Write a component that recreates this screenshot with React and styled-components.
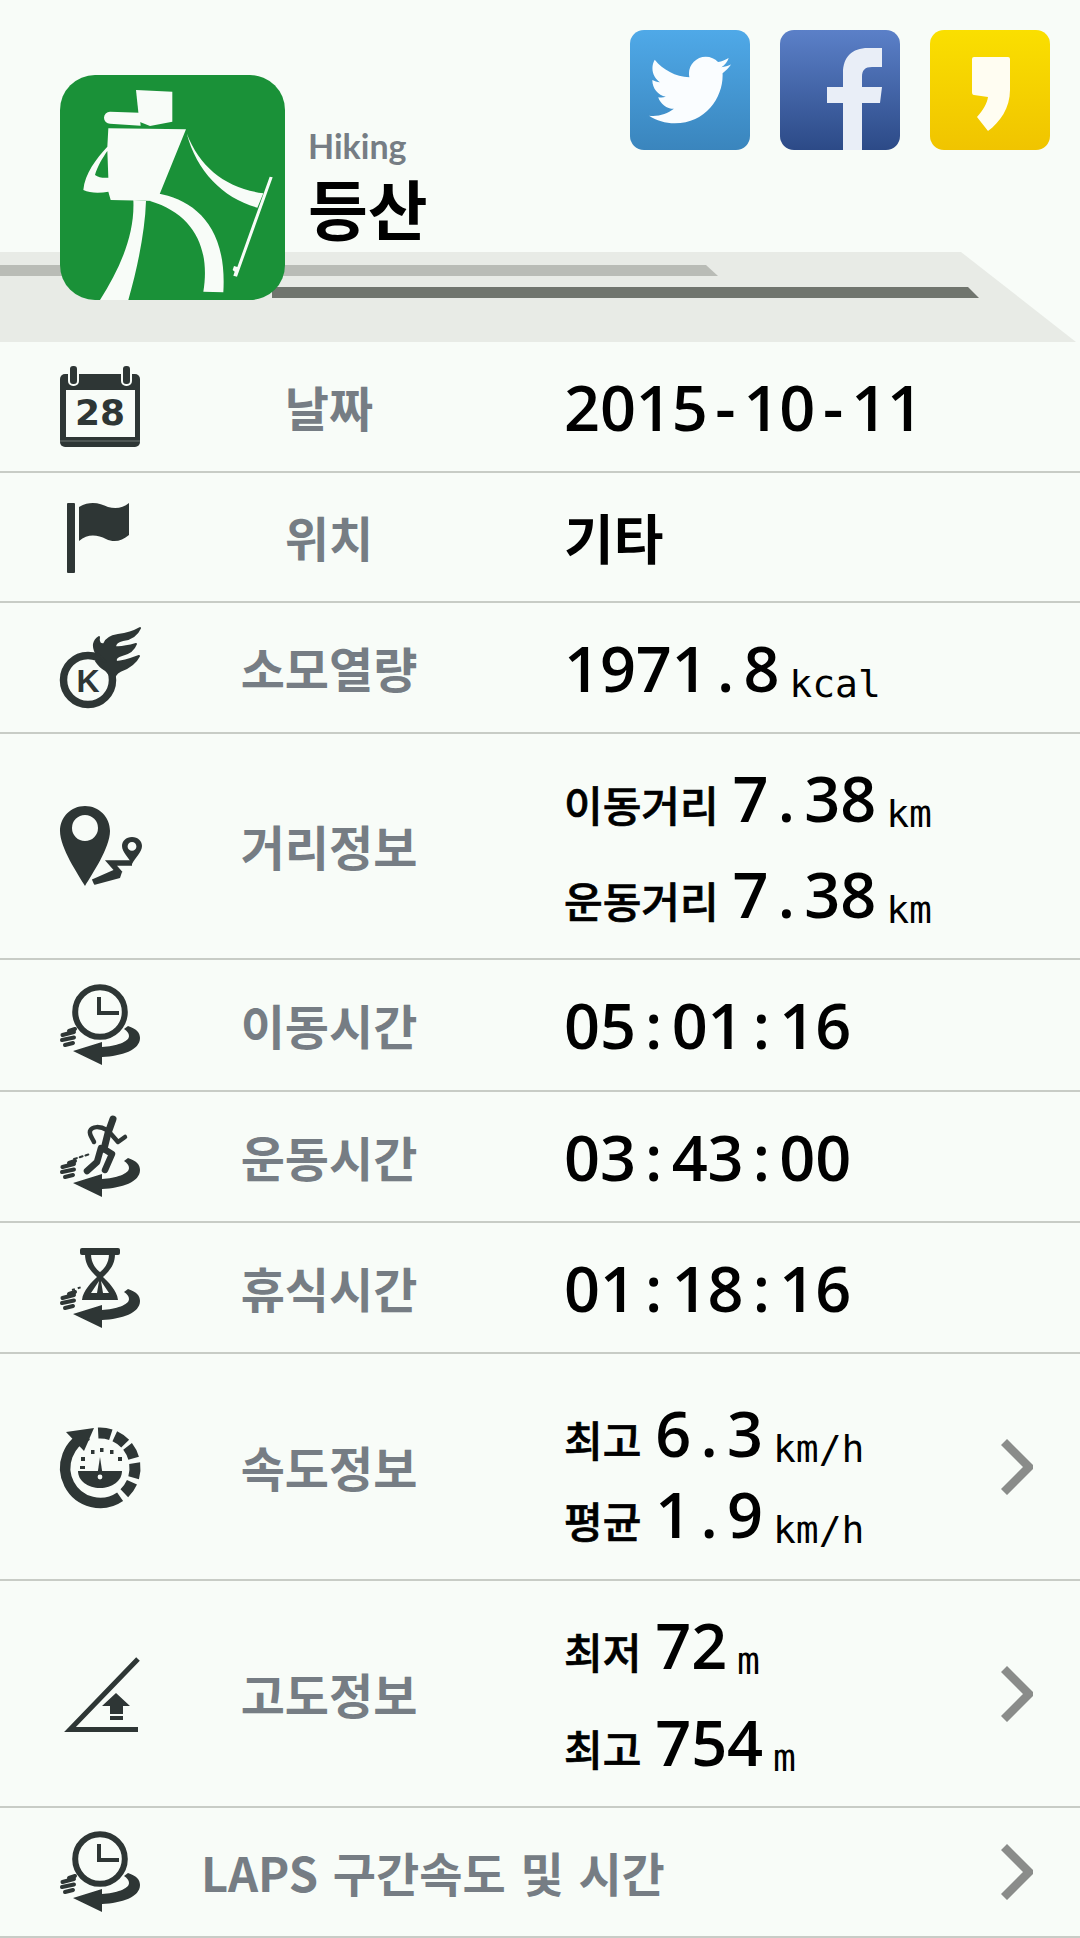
import React from "react";
import styled, { createGlobalStyle } from "styled-components";
import { FaTwitter } from "react-icons/fa";

const GlobalStyle = createGlobalStyle`
  html, body { margin: 0; padding: 0; background: #f8fcf8; }
  * { box-sizing: border-box; }
`;

const ink = "#2e3635";

const Page = styled.div`
  width: 1080px;
  height: 1938px;
  overflow: hidden;
  background: #f8fcf8;
  font-family: "Noto Sans CJK KR", "Noto Sans", sans-serif;
`;

const Header = styled.header`
  position: relative;
  height: 342px;
  display: flex;
  align-items: flex-start;
  padding: 30px 30px 0 60px;
`;

const Road = styled.svg`
  position: absolute;
  left: 0;
  bottom: 0;
  width: 1080px;
  height: 90px;
`;

const Brand = styled.div`
  position: relative;
  display: flex;
  align-items: flex-start;
  margin-top: 45px;
  gap: 23px;
`;

const AppIcon = styled.svg`
  width: 225px;
  height: 225px;
  flex: none;
  display: block;
`;

const BrandText = styled.div`
  display: flex;
  flex-direction: column;
  padding-top: 49px;
`;

const EnglishName = styled.div`
  font-family: Lato, "Noto Sans", sans-serif;
  font-weight: 700;
  font-size: 34px;
  line-height: 44px;
  color: #767d84;
`;

const KoreanName = styled.div`
  font-weight: 700;
  font-size: 65px;
  line-height: 72px;
  margin-top: 3px;
  color: #000;
`;

const Socials = styled.div`
  position: relative;
  margin-left: auto;
  display: flex;
  gap: 30px;
`;

const SocialButton = styled.div`
  width: 120px;
  height: 120px;
  border-radius: 14px;
  overflow: hidden;
  display: flex;
  align-items: center;
  justify-content: center;
  background: linear-gradient(180deg, ${(p) => p.$from}, ${(p) => p.$to});
  color: #fafdff;
  svg { display: block; }
`;

const Row = styled.section`
  height: ${(p) => p.$height}px;
  border-bottom: 2px solid #c8ccc6;
  display: grid;
  grid-template-columns: 80px 378px 1fr auto;
  align-items: center;
  padding: 0 47px 0 60px;
`;

const LinkRow = styled(Row)`
  grid-template-columns: 80px 1fr auto;
`;

const IconSvg = styled.svg`
  width: 80px;
  height: 80px;
  display: block;
  overflow: visible;
`;

const Label = styled.div`
  text-align: center;
  font-weight: 700;
  font-size: 48px;
  line-height: 60px;
  padding-bottom: 2px;
  color: #767d84;
`;

const LinkLabel = styled.div`
  margin-left: 61px;
  font-weight: 700;
  font-size: 47px;
  line-height: 60px;
  word-spacing: 4px;
  color: #767d84;
`;

const Values = styled.div`
  padding-left: 46px;
  padding-top: ${(p) => p.$shift || 0}px;
  display: flex;
  flex-direction: column;
  gap: ${(p) => p.$gap || 0}px;
`;

const ValueLine = styled.div`
  display: flex;
  align-items: baseline;
  height: 72px;
  line-height: 72px;
  color: #000;
  white-space: nowrap;
`;

const Caption = styled.span`
  font-weight: 500;
  font-size: 42px;
  margin-right: 14px;
  -webkit-text-stroke: 0.7px #000;
`;

const Digits = styled.span`
  font-family: "Open Sans", "Noto Sans", sans-serif;
  font-weight: 600;
  font-size: 63px;
`;

// monospaced cell: the original uses a fixed-pitch digit face
const Cell = styled.span`
  display: inline-block;
  width: 35.9px;
  text-align: center;
`;

const Word = styled.span`
  font-weight: 700;
  font-size: 54px;
`;

const Unit = styled.span`
  font-family: "DejaVu Sans Mono", monospace;
  font-size: 38px;
  margin-left: 10px;
  transform: translateY(5px);
`;

const Chevron = styled.svg`
  width: 32px;
  height: 56px;
  display: block;
`;

const Arrow = () => (
  <Chevron viewBox="0 0 32 56">
    <path d="M3 3 L28 28 L3 53" fill="none" stroke="#8a8c8a" strokeWidth="8.5" />
  </Chevron>
);

const Swoosh = () => (
  <g fill={ink}>
    <path d="M68 41 C77 44 80 48 80 53 C80 65 62 71 42 72 L42 80 L13 66 L42 57 L42 62 C56 61 69 57 69 51 C69 48 67 46 64 44 Z" />
    <g stroke={ink} strokeWidth="4" strokeLinecap="round" fill="none">
      <path d="M9 46 L15 44" />
      <path d="M2.5 50 L14 47" />
      <path d="M2 55 L14 52.5" />
      <path d="M5 60 L13 58" />
    </g>
  </g>
);

const CalendarIcon = () => (
  <IconSvg viewBox="0 0 80 80">
    <rect x="0" y="7" width="80" height="73" rx="5" fill={ink} />
    <rect x="6" y="23" width="69" height="47" fill="#f8fcf8" />
    <path d="M0 74 H80" stroke="#6f7674" strokeWidth="1.2" />
    <rect x="9" y="-2" width="9" height="20" rx="4" fill={ink} stroke="#f8fcf8" strokeWidth="2" />
    <rect x="62" y="-2" width="9" height="20" rx="4" fill={ink} stroke="#f8fcf8" strokeWidth="2" />
    <text x="40" y="58" textAnchor="middle" fontFamily="DejaVu Sans, sans-serif" fontWeight="700" fontSize="36" fill={ink}>28</text>
  </IconSvg>
);

const FlagIcon = () => (
  <IconSvg viewBox="0 0 80 80">
    <rect x="7" y="6" width="8" height="70" rx="1" fill={ink} />
    <path d="M19 10 C32 3 40 7 48 10 C56 12 63 11 69 6 V38 C62 44 54 46 46 42 C38 38 28 36 19 44 Z" fill={ink} />
  </IconSvg>
);

const FireIcon = () => (
  <IconSvg viewBox="0 0 80 80">
    <circle cx="28" cy="52" r="24.5" fill="none" stroke={ink} strokeWidth="7.5" />
    <text x="28" y="64" textAnchor="middle" fontFamily="Liberation Sans, sans-serif" fontWeight="700" fontSize="32" fill={ink}>K</text>
    <path
      d="M36 25 C33 19 33 13 39 9 C38 14 40 17 44 16 C46 10 52 8 58 7 C65 6 73 4 80 0 C77 7 70 11 63 12 C58 13 55 16 55 19 C62 20 69 18 76 16 C73 24 67 26 62 27 C57 28 55 31 56 34 C63 34 71 31 79 28 C74 38 65 41 60 43 C56 45 54 48 54 53 C50 47 48 43 44 41 C40 39 38 36 36 33 C40 32 44 33 46 34 C42 30 40 27 36 25 Z"
      fill={ink}
      stroke={ink}
      strokeWidth="2"
      strokeLinejoin="round"
    />
  </IconSvg>
);

const PinIcon = () => (
  <IconSvg viewBox="0 0 80 80">
    <path
      fillRule="evenodd"
      d="M25 0 C39 0 50 11 50 25 C50 42 32 68 25 80 C18 68 0 42 0 25 C0 11 11 0 25 0 Z M25 9 A13 13 0 1 0 25 35 A13 13 0 1 0 25 9 Z"
      fill={ink}
    />
    <path
      fillRule="evenodd"
      d="M72 31 C78 31 82 35 82 40 C82 46 75 52 72 58 C69 52 62 46 62 40 C62 35 66 31 72 31 Z M72 36 A4.4 4.4 0 1 0 72 44.8 A4.4 4.4 0 1 0 72 36 Z"
      fill={ink}
    />
    <path d="M72 57 H51 L58 65 L33 76" fill="none" stroke={ink} strokeWidth="5.5" />
    <path d="M40 72 L62 66 L60 72 L34 79 Z" fill={ink} />
  </IconSvg>
);

const ClockIcon = () => (
  <IconSvg viewBox="0 0 80 80">
    <circle cx="40" cy="27" r="24.8" fill="none" stroke={ink} strokeWidth="6" />
    <path d="M39 12 V28 H59" fill="none" stroke={ink} strokeWidth="4" />
    <Swoosh />
  </IconSvg>
);

const RunnerIcon = () => (
  <IconSvg viewBox="0 0 80 80">
    <g fill="none" stroke={ink} strokeWidth="4.5" strokeLinecap="round" strokeLinejoin="round">
      <path d="M53 2 L48 16 L44 32" strokeWidth="7" />
      <path d="M47 13 C40 9 32 9 30 14 C29 18 33 22 34 25" />
      <path d="M51 17 L58 25 L65 20" />
      <path d="M44 32 L52 37 L45 53" strokeWidth="6.5" />
      <path d="M41 31 L37 45 L27 54" strokeWidth="6.5" />
      <path d="M14 42 L30 37" strokeWidth="2" strokeDasharray="3 3" />
    </g>
    <Swoosh />
  </IconSvg>
);

const HourglassIcon = () => (
  <IconSvg viewBox="0 0 80 80">
    <rect x="20" y="0" width="40" height="7" rx="2" fill={ink} />
    <path d="M25 6 C25 18 32 24 37 29 C32 34 23 42 22 52 H58 C57 42 48 34 43 29 C48 24 55 18 55 6 H49 C49 16 43 22 40 24 C37 22 31 16 31 6 Z" fill={ink} />
    <path d="M39 33 L31 45 H37 Z M41 33 L49 45 H43 Z" fill="#f8fcf8" />
    <path d="M12 42 L22 39" stroke={ink} strokeWidth="2" strokeDasharray="3 3" />
    <Swoosh />
  </IconSvg>
);

// arc block of the speed gauge, angles from 12 o'clock
const ringBlock = (from, to, r = 35, cx = 40, cy = 41) => {
  const pt = (a) => {
    const rad = ((a - 90) * Math.PI) / 180;
    return `${(cx + r * Math.cos(rad)).toFixed(2)} ${(cy + r * Math.sin(rad)).toFixed(2)}`;
  };
  return `M${pt(from)} A${r} ${r} 0 0 1 ${pt(to)}`;
};

const SpeedIcon = () => (
  <IconSvg viewBox="0 0 80 80">
    <path d="M28 8.1 A35 35 0 1 0 60.1 69.7" fill="none" stroke={ink} strokeWidth="10.5" />
    <path d="M6 5 L34 1 L24 24 Z" fill={ink} />
    {[[-3, 18], [25, 46], [52, 74], [82, 106], [114, 136]].map(([a, b]) => (
      <path key={a} d={ringBlock(a, b)} fill="none" stroke={ink} strokeWidth="11" />
    ))}
    <path d="M18 44 H62 C62 54 52 61 40 61 C28 61 18 54 18 44 Z" fill={ink} />
    <path d="M40 30 L43 50 H37 Z" fill={ink} />
    <circle cx="40" cy="50" r="2.4" fill="#f8fcf8" />
    <g fill={ink}>
      <rect x="20" y="39" width="5" height="3" />
      <rect x="21" y="30" width="4" height="4" />
      <rect x="31" y="23" width="3.5" height="4" />
      <rect x="40" y="21" width="3.5" height="4" />
      <rect x="50" y="23" width="3.5" height="4" />
      <rect x="58" y="30" width="4" height="4" />
    </g>
  </IconSvg>
);

const SlopeIcon = () => (
  <IconSvg viewBox="0 0 80 80">
    <path d="M78 5 L10 75.5 H78" fill="none" stroke={ink} strokeWidth="5" />
    <path d="M56 39 L70 52 H63 V60 H50 V52 H42 Z" fill={ink} />
    <rect x="50" y="62" width="13" height="4" fill={ink} />
  </IconSvg>
);

const HikerIcon = () => (
  <AppIcon viewBox="30 30 675 675">
    <rect x="30" y="30" width="675" height="675" rx="105" fill="#1a9138" />
    <g fill="#f8fcf8">
      <path d="M258 75 L367 80 L367 170 L300 183 L268 170 Z" />
      <path d="M268 143 L180 140 A18 18 0 0 0 180 176 L272 182 Z" />
      <path d="M175 190 L408 193 L330 385 L322 408 L182 405 L175 380 C150 385 120 385 100 375 C104 325 140 280 172 245 Z M172 258 C158 278 142 305 135 330 C145 337 160 340 175 338 Z" fillRule="evenodd" />
      <path d="M410 205 C450 310 530 370 640 385 L622 428 C520 400 440 320 410 205 Z" />
      <path d="M659 335 L668 337 L561 635 L550 632 L554 620 L548 615 L552 603 L562 606 Z" />
      <path d="M250 405 L288 408 C285 500 262 610 235 705 L150 705 C210 610 255 510 250 405 Z" />
      <path d="M322 385 C430 405 532 480 520 682 L460 680 C480 560 440 450 300 408 Z" />
    </g>
  </AppIcon>
);

const rows = [
  { height: 131, icon: <CalendarIcon />, label: "날짜", lines: [{ digits: "2015-10-11" }] },
  { height: 130, icon: <FlagIcon />, label: "위치", lines: [{ word: "기타" }] },
  { height: 131, icon: <FireIcon />, label: "소모열량", lines: [{ digits: "1971.8", unit: "kcal" }] },
  {
    height: 226,
    icon: <PinIcon />,
    label: "거리정보",
    gap: 24,
    lines: [
      { caption: "이동거리", digits: "7.38", unit: "km" },
      { caption: "운동거리", digits: "7.38", unit: "km" },
    ],
  },
  { height: 132, icon: <ClockIcon />, label: "이동시간", lines: [{ digits: "05:01:16" }] },
  { height: 131, icon: <RunnerIcon />, label: "운동시간", lines: [{ digits: "03:43:00" }] },
  { height: 131, icon: <HourglassIcon />, label: "휴식시간", lines: [{ digits: "01:18:16" }] },
  {
    height: 227,
    icon: <SpeedIcon />,
    label: "속도정보",
    gap: 9,
    shift: 14,
    arrow: true,
    lines: [
      { caption: "최고", digits: "6.3", unit: "km/h" },
      { caption: "평균", digits: "1.9", unit: "km/h" },
    ],
  },
  {
    height: 227,
    icon: <SlopeIcon />,
    label: "고도정보",
    gap: 25,
    arrow: true,
    lines: [
      { caption: "최저", digits: "72", unit: "m" },
      { caption: "최고", digits: "754", unit: "m" },
    ],
  },
];

export default function App() {
  return (
    <Page>
      <GlobalStyle />
      <Header>
        <Road viewBox="0 0 1080 90" preserveAspectRatio="none">
          <path d="M0 0 H961 L1076 90 H0 Z" fill="#e8ebe6" />
          <path d="M0 13 H706 L718 24 H0 Z" fill="#b9bcb6" />
          <path d="M272 35 H968 L979 46 H272 Z" fill="#70756e" />
        </Road>
        <Brand>
          <HikerIcon />
          <BrandText>
            <EnglishName>Hiking</EnglishName>
            <KoreanName>등산</KoreanName>
          </BrandText>
        </Brand>
        <Socials>
          <SocialButton $from="#4fa9e8" $to="#3a85bd">
            <FaTwitter size={82} />
          </SocialButton>
          <SocialButton $from="#5b80c8" $to="#2c4a87">
            <svg width="120" height="120" viewBox="0 0 120 120">
              <path d="M63 120 V73 H47 V57 H63 V43 C63 27 72 18 88 18 H102 V37 H92 C85 37 82 40 82 47 V57 H102 L100 73 H82 V120 Z" fill="#e9eef7" />
            </svg>
          </SocialButton>
          <SocialButton $from="#fadf00" $to="#f0c400">
            <svg width="120" height="120" viewBox="0 0 120 120">
              <path d="M42 29 Q42 27 44 27 H78 Q80 27 80 29 V60 C80 78 70 92 58 101 L47 87 C53 80 57 74 58 67 L44 65 Q42 65 42 62 Z" fill="#fffdf2" />
            </svg>
          </SocialButton>
        </Socials>
      </Header>
      {rows.map((row) => (
        <Row key={row.label} $height={row.height}>
          {row.icon}
          <Label>{row.label}</Label>
          <Values $gap={row.gap} $shift={row.shift}>
            {row.lines.map((line, i) => (
              <ValueLine key={i}>
                {line.caption && <Caption>{line.caption}</Caption>}
                {line.word && <Word>{line.word}</Word>}
                {line.digits && (
                  <Digits>
                    {[...line.digits].map((ch, j) => (
                      <Cell key={j}>{ch}</Cell>
                    ))}
                  </Digits>
                )}
                {line.unit && <Unit>{line.unit}</Unit>}
              </ValueLine>
            ))}
          </Values>
          {row.arrow ? <Arrow /> : <span />}
        </Row>
      ))}
      <LinkRow $height={130}>
        <ClockIcon />
        <LinkLabel>LAPS 구간속도 및 시간</LinkLabel>
        <Arrow />
      </LinkRow>
    </Page>
  );
}
